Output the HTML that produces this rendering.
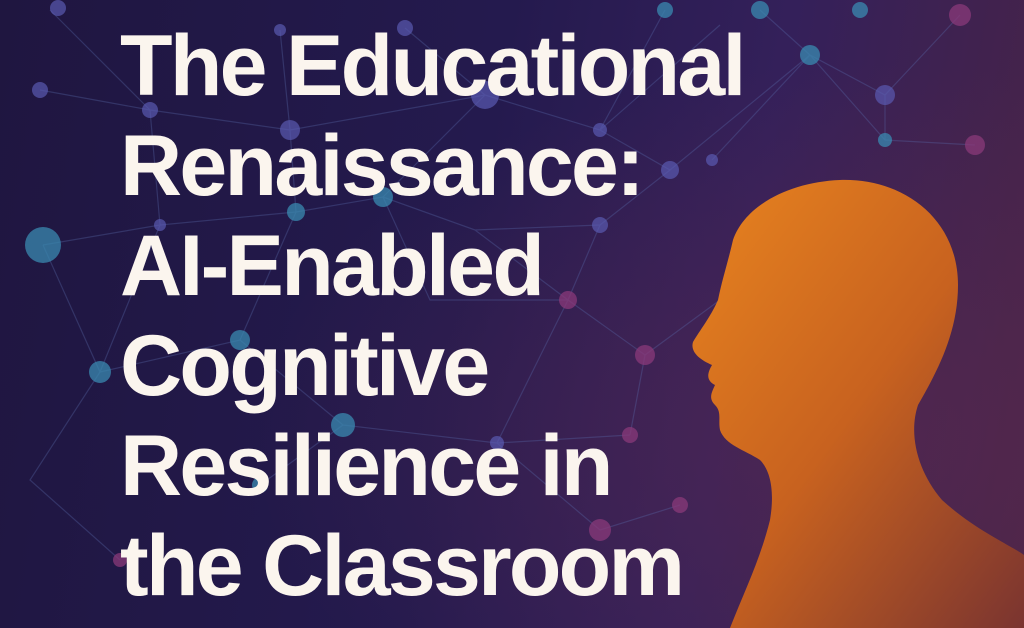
<!DOCTYPE html>
<html><head><meta charset="utf-8"><style>
html,body{margin:0;padding:0}
body{width:1024px;height:628px;overflow:hidden;position:relative;background:linear-gradient(100deg,#1f1640 0%,#241a4e 45%,#34205a 70%,#4a2446 100%)}
svg{position:absolute;left:0;top:0}
.t{position:absolute;left:120px;top:16px;font-family:"Liberation Sans",sans-serif;font-weight:bold;font-size:86px;line-height:100px;letter-spacing:-2.7px;color:#fbf5ee;margin:0;white-space:nowrap}
</style></head><body>
<svg width="1024" height="628" viewBox="0 0 1024 628">
<defs>
<linearGradient id="h" x1="0" y1="0" x2="1" y2="1">
<stop offset="0" stop-color="#e8841f"/><stop offset="0.5" stop-color="#c8621f"/><stop offset="1" stop-color="#7a3430"/></linearGradient>
<radialGradient id="g" cx="0.85" cy="0.7" r="0.6"><stop offset="0" stop-color="#5a2a50" stop-opacity="0.6"/><stop offset="1" stop-color="#5a2a50" stop-opacity="0"/></radialGradient>
</defs>
<rect width="1024" height="628" fill="url(#g)"/>
<g stroke="#5a6aa8" stroke-opacity="0.35" stroke-width="1.2" fill="none">
<path d="M40 90 L150 110 L290 130 L485 95 L600 130 L670 170 L810 55 L885 95 L960 15 M150 110 L50 10 M290 130 L280 30 M485 95 L405 28 M600 130 L665 10 M810 55 L760 10 M600 130 L720 25 M43 245 L160 225 L296 212 L383 197 L475 230 L600 225 L670 170 M160 225 L150 110 M296 212 L290 130 M383 197 L485 95 M43 245 L100 372 L240 340 L343 425 L497 443 L630 435 M100 372 L30 480 L120 560 M240 340 L296 212 M568 300 L600 225 M568 300 L497 443 M568 300 L645 355 L630 435 M645 355 L720 300 M475 230 L568 300 M343 425 L260 485 M497 443 L600 530 M600 530 L680 505 M100 372 L160 225 M810 55 L885 140 L975 145 M885 95 L885 140 M712 160 L810 55 M383 197 L430 300 L568 300"/>
</g>
<g fill="#5a5ab0" fill-opacity="0.7">
<circle cx="485" cy="95" r="14"/><circle cx="290" cy="130" r="10"/><circle cx="150" cy="110" r="8"/><circle cx="40" cy="90" r="8"/><circle cx="600" cy="130" r="7"/><circle cx="670" cy="170" r="9"/><circle cx="405" cy="28" r="8"/><circle cx="280" cy="30" r="6"/><circle cx="58" cy="8" r="8"/><circle cx="600" cy="225" r="8"/><circle cx="497" cy="443" r="7"/><circle cx="885" cy="95" r="10"/><circle cx="712" cy="160" r="6"/><circle cx="160" cy="225" r="6"/>
</g>
<g fill="#3a8ab0" fill-opacity="0.75">
<circle cx="43" cy="245" r="18"/><circle cx="296" cy="212" r="9"/><circle cx="383" cy="197" r="10"/><circle cx="100" cy="372" r="11"/><circle cx="240" cy="340" r="10"/><circle cx="343" cy="425" r="12"/><circle cx="810" cy="55" r="10"/><circle cx="760" cy="10" r="9"/><circle cx="665" cy="10" r="8"/><circle cx="860" cy="10" r="8"/><circle cx="885" cy="140" r="7"/><circle cx="260" cy="485" r="8"/>
</g>
<g fill="#8a3a7a" fill-opacity="0.75">
<circle cx="960" cy="15" r="11"/><circle cx="975" cy="145" r="10"/><circle cx="568" cy="300" r="9"/><circle cx="645" cy="355" r="10"/><circle cx="630" cy="435" r="8"/><circle cx="600" cy="530" r="11"/><circle cx="680" cy="505" r="8"/><circle cx="120" cy="560" r="7"/>
</g>
<path fill="url(#h)" d="M840 180 C 905 178 958 220 958 285 C 958 335 935 375 918 405 C 908 435 918 472 942 500 C 975 530 1010 545 1024 555 L1024 628 L730 628 C 745 590 760 560 770 520 C 775 490 770 470 760 460 C 745 450 725 445 720 430 C 718 420 722 412 715 405 C 708 398 712 392 715 385 C 705 380 708 372 712 365 C 700 360 690 352 693 342 C 700 330 710 318 718 300 C 722 280 728 262 733 240 C 745 205 790 182 840 180 Z"/>
</svg>
<div class="t">The Educational<br>Renaissance:<br>AI-Enabled<br>Cognitive<br>Resilience in<br>the Classroom</div>
</body></html>
